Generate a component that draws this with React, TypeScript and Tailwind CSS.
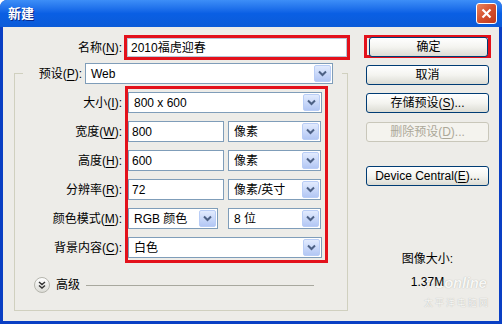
import type { ReactNode } from "react";

// underline the access-key letter
function U({ children }: { children: ReactNode }) {
  return <span className="underline underline-offset-2">{children}</span>;
}

function Label({ children, className = "" }: { children: ReactNode; className?: string }) {
  return (
    <div className={`h-[21px] flex items-center justify-end whitespace-nowrap ${className}`}>{children}</div>
  );
}

function Arrow() {
  return (
    <div className="w-[17px] h-[17px] mr-[1px] shrink-0 rounded-[2px] border border-[#b9cdf6] bg-gradient-to-b from-[#e2ebfe] to-[#b3c7f4] flex items-center justify-center">
      <svg width="9" height="7" viewBox="0 0 9 7">
        <path d="M1 1.5 L4.5 5 L8 1.5" fill="none" stroke="#4d6185" strokeWidth="2" />
      </svg>
    </div>
  );
}

function Select({ text, className = "" }: { text: string; className?: string }) {
  return (
    <div className={`h-[21px] border border-[#7f9db9] bg-white flex items-center ${className}`}>
      <span className="flex-1 pl-[5px] whitespace-nowrap">{text}</span>
      <Arrow />
    </div>
  );
}

function Field({ text, className = "" }: { text: string; className?: string }) {
  return (
    <div className={`h-[21px] border border-[#7f9db9] bg-white flex items-center pl-[3px] ${className}`}>
      {text}
    </div>
  );
}

function Button({ children, disabled = false, className = "" }: { children: ReactNode; disabled?: boolean; className?: string }) {
  return (
    <div
      className={`w-[123px] h-[20px] ml-[2px] rounded-[3px] border flex items-center justify-center whitespace-nowrap ${
        disabled
          ? "border-[#c9c7ba] bg-[#f4f3ee] text-[#aca899]"
          : "border-[#003c74] bg-gradient-to-b from-white via-[#f4f4f0] to-[#dcdcd4] text-black"
      } ${className}`}
    >
      {children}
    </div>
  );
}

export default function App() {
  return (
    <div className="w-[502px] h-[324px] bg-[#0a3fc4] rounded-t-[7px] overflow-hidden flex flex-col font-['Liberation_Sans','Noto_Sans_CJK_SC',sans-serif] text-[12px] text-black">
      {/* title bar */}
      <div className="h-[27px] shrink-0 bg-gradient-to-b from-[#3d8ef7] via-[#0a5fe4] to-[#0b5bd8] flex items-center justify-between pl-[8px] pr-[5px]">
        <span className="text-white font-bold text-[13px] [text-shadow:1px_1px_0_#0a2a8a]">新建</span>
        <div className="w-[21px] h-[21px] rounded-[3px] border border-white bg-gradient-to-br from-[#e8845f] via-[#d5502d] to-[#c0391c] flex items-center justify-center">
          <svg width="11" height="11" viewBox="0 0 11 11">
            <path d="M1.5 1.5 L9.5 9.5 M9.5 1.5 L1.5 9.5" stroke="white" strokeWidth="2.2" />
          </svg>
        </div>
      </div>

      {/* body */}
      <div className="flex-1 mx-[3px] mb-[3px] bg-[#edece8] flex pt-[8px]">
        <div className="w-[361px] flex flex-col">
          {/* name row */}
          <div className="flex items-center">
            <Label className="w-[119px]">
              名称(<U>N</U>):
            </Label>
            <div className="ml-[2px] w-[226px] h-[25px] border-[3px] border-[#e3111b] bg-white">
              <div className="h-full border border-[#b8c6d6] flex items-center pl-[3px]">2010福虎迎春</div>
            </div>
          </div>

          {/* settings group */}
          <fieldset className="ml-[11px] mt-[3px] w-[334px] h-[248px] border border-[#d0d0bf] pl-[8px]">
            <legend className="flex items-center pr-[9px]">
              <Label className="w-[59px]">
                预设(<U>P</U>):
              </Label>
              <Select text="Web" className="ml-[3px] w-[248px]" />
            </legend>

            <div className="flex mt-[2px]">
              <div className="w-[99px] flex flex-col gap-[8px] pt-[6px]">
                <Label>大小(<U>I</U>):</Label>
                <Label>宽度(<U>W</U>):</Label>
                <Label>高度(<U>H</U>):</Label>
                <Label>分辨率(<U>R</U>):</Label>
                <Label>颜色模式(<U>M</U>):</Label>
                <Label>背景内容(<U>C</U>):</Label>
              </div>
              <div className="ml-[3px] w-[203px] border-[3px] border-[#e3111b] pt-[3px] pb-[2px] pr-[3px] flex flex-col gap-[8px]">
                <Select text="800 x 600" />
                <div className="flex gap-[4px]">
                  <Field text="800" className="w-[96px]" />
                  <Select text="像素" className="w-[93px]" />
                </div>
                <div className="flex gap-[4px]">
                  <Field text="600" className="w-[96px]" />
                  <Select text="像素" className="w-[93px]" />
                </div>
                <div className="flex gap-[4px]">
                  <Field text="72" className="w-[96px]" />
                  <Select text="像素/英寸" className="w-[93px]" />
                </div>
                <div className="flex gap-[10px]">
                  <Select text="RGB 颜色" className="w-[90px]" />
                  <Select text="8 位" className="w-[93px]" />
                </div>
                <Select text="白色" />
              </div>
            </div>

            <div className="flex items-center mt-[14px] ml-[11px] h-[16px]">
              <div className="w-[16px] h-[16px] rounded-full border border-[#b5b5ad] bg-gradient-to-b from-white to-[#dcdcd6] flex items-center justify-center">
                <svg width="8" height="8" viewBox="0 0 8 8">
                  <path d="M1 1 L4 3.5 L7 1 M1 4.5 L4 7 L7 4.5" fill="none" stroke="#333" strokeWidth="1.4" />
                </svg>
              </div>
              <span className="ml-[6px]">高级</span>
              <div className="ml-[6px] w-[228px] h-px bg-[#a8a89e]" />
            </div>
          </fieldset>
        </div>

        {/* right column */}
        <div className="w-[127px] flex flex-col relative">
          {/* faint watermark, sits under the size readout */}
          <div className="absolute left-[60px] top-[238px] flex flex-col items-start whitespace-nowrap text-[#f7f7f5] pointer-events-none [text-shadow:0_0_1px_#a9a9a4]">
            <span className="italic font-bold text-[15px] leading-[20px] tracking-[-0.3px]">PConline</span>
            <span className="mt-[5px] text-[9px] leading-[11px] tracking-[2px]">太平洋电脑网</span>
          </div>

          <div className="relative h-[23px] border-[3px] border-[#e3111b] flex items-center">
            <Button className="h-[17px] ml-[0px] w-[121px]">确定</Button>
          </div>
          <Button className="mt-[7px]">取消</Button>
          <Button className="mt-[8px]">
            存储预设(<U>S</U>)...
          </Button>
          <Button disabled className="mt-[9px]">
            删除预设(<U>D</U>)...
          </Button>
          <Button className="mt-[24px]">
            Device Central(<U>E</U>)...
          </Button>
          <div className="relative mt-[64px] flex flex-col items-center">
            <span>图像大小:</span>
            <span className="mt-[5px]">1.37M</span>
          </div>
        </div>
      </div>
    </div>
  );
}
